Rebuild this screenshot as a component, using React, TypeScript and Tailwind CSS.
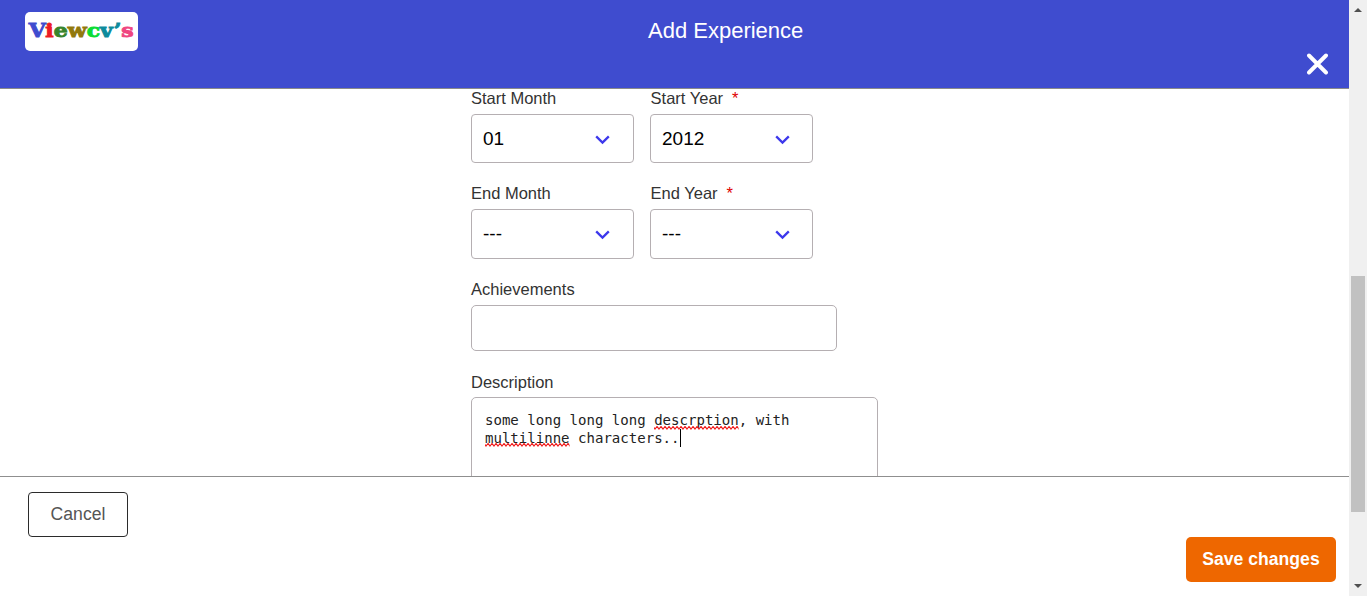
import type { ReactNode } from 'react';

function Logo() {
  return (
    <svg width="113" height="39" viewBox="0 0 113 39" className="mt-3 block shrink-0">
      <rect width="113" height="39" rx="5" fill="#fff" />
      <text x="3.7" y="25" fontFamily="'DejaVu Serif', serif" fontWeight="700" fontSize="18" strokeWidth="0.9" textLength="105" lengthAdjust="spacingAndGlyphs">
        <tspan fill="#3f4ccf" stroke="#3f4ccf">V</tspan>
        <tspan fill="#ed1c24" stroke="#ed1c24">i</tspan>
        <tspan fill="#38852c" stroke="#38852c">e</tspan>
        <tspan fill="#92790c" stroke="#92790c">w</tspan>
        <tspan fill="#0bdc35" stroke="#0bdc35">c</tspan>
        <tspan fill="#0d8b9c" stroke="#0d8b9c">v</tspan>
        <tspan fill="#0d8b9c" stroke="#0d8b9c">’</tspan>
        <tspan fill="#ef4580" stroke="#ef4580">s</tspan>
      </text>
    </svg>
  );
}

function Label({ children, required }: { children: ReactNode; required?: boolean }) {
  return (
    <div className={`${required ? 'pl-[0.6px]' : ''} h-[20px] whitespace-nowrap text-[16.5px] leading-[18px] text-[#333]`}>
      {children}
      {required && <span className="ml-[9px] text-[#e00000]">*</span>}
    </div>
  );
}

function SelectBox({ value, tall, inset }: { value: string; tall?: boolean; inset?: boolean }) {
  return (
    <div className={`${tall ? 'h-[50px]' : 'h-[49px]'} ${inset ? 'pr-[22px]' : 'pr-[23px]'} mt-[5px] flex w-[163px] items-center justify-between rounded-[4px] border border-[#b5afb2] pl-[11px] text-[19px] text-black`}>
      <span className={tall ? '' : 'pt-[2px]'}>{value}</span>
      <svg width="15" height="10" viewBox="0 0 15 10" fill="none" stroke="#3d38ec" strokeWidth="2.3" className="mt-[2px]">
        <path d="M1.2 1.4 L7.5 7.6 L13.8 1.4" />
      </svg>
    </div>
  );
}

function Misspelled({ children }: { children: string }) {
  return (
    <span className="relative">
      {children}
      <svg className="absolute left-0 top-[13.5px] h-[4px] w-full">
        <defs>
          <pattern id="wave" width="4" height="4" patternUnits="userSpaceOnUse">
            <path d="M-1 0.5 L1 3 L3 0.5 L5 3" fill="none" stroke="#f01818" strokeWidth="1.1" />
          </pattern>
        </defs>
        <rect width="100%" height="4" fill="url(#wave)" />
      </svg>
    </span>
  );
}

export default function App() {
  return (
    <div className="flex h-[596px] w-[1367px] overflow-hidden bg-white font-['Liberation_Sans',Arial,sans-serif]">
      <div className="flex w-[1349px] flex-col">
        <header className="flex h-[89px] shrink-0 justify-between border-b border-[#8a8a8a] bg-[#3f4ccf] pl-[25px] pr-[20px]">
          <Logo />
          <h1 className="ml-[510px] mt-[18px] flex-1 text-[22px] leading-[25px] text-white">Add Experience</h1>
          <svg width="23" height="22" viewBox="0 0 23 22" className="mt-[53px]" fill="none" stroke="#fff" strokeWidth="3.9" strokeLinecap="round">
            <path d="M3 2.5 L20 19.5 M20 2.5 L3 19.5" />
          </svg>
        </header>

        <main className="h-[387px] shrink-0 overflow-hidden pl-[471px]">
          <div className="flex gap-4">
            <div>
              <Label>Start Month</Label>
              <SelectBox value="01" />
            </div>
            <div>
              <Label required>Start Year</Label>
              <SelectBox value="2012" inset />
            </div>
          </div>
          <div className="mt-[21px] flex gap-4">
            <div>
              <Label>End Month</Label>
              <SelectBox value="---" tall />
            </div>
            <div>
              <Label required>End Year</Label>
              <SelectBox value="---" tall inset />
            </div>
          </div>
          <div className="mt-[21px]">
            <Label>Achievements</Label>
            <div className="mt-[5px] h-[46px] w-[366px] rounded-[5px] border border-[#b5afb2]" />
          </div>
          <div className="mt-[22px]">
            <Label>Description</Label>
            <div className="mt-[4px] h-[120px] w-[407px] whitespace-nowrap rounded-[5px] border border-[#b5afb2] pl-[13px] pt-[13px] font-['DejaVu_Sans_Mono',monospace] text-[14.06px] leading-[18px] text-[#222]">
              <div>some long long long <Misspelled>descrption</Misspelled>, with</div>
              <div className="flex">
                <Misspelled>multilinne</Misspelled>
                <span className="whitespace-pre"> characters..</span>
                <span className="h-[18px] w-px bg-black" />
              </div>
            </div>
          </div>
        </main>

        <footer className="flex flex-1 justify-between border-t border-[#8f8f8f] pl-[28px] pr-[13px]">
          <button className="mt-[15px] h-[45px] w-[100px] rounded-[4px] border border-[#2b2b2b] text-[17.6px] text-[#555]">Cancel</button>
          <button className="mt-[60px] h-[45px] w-[150px] rounded-[5px] bg-[#ee6700] pb-px text-[17.6px] font-bold text-white">Save changes</button>
        </footer>
      </div>

      <div className="flex w-[18px] flex-col items-center bg-[#f0f0f0]">
        <svg width="8" height="4" viewBox="0 0 8 4" className="mt-[8px] shrink-0">
          <path d="M4 0 L8 4 H0 Z" fill="#505050" />
        </svg>
        <div className="mt-[264px] h-[236px] w-[14px] shrink-0 bg-[#c1c1c1]" />
        <svg width="8" height="4" viewBox="0 0 8 4" className="mt-[72px] shrink-0">
          <path d="M0 0 H8 L4 4 Z" fill="#505050" />
        </svg>
      </div>
    </div>
  );
}
